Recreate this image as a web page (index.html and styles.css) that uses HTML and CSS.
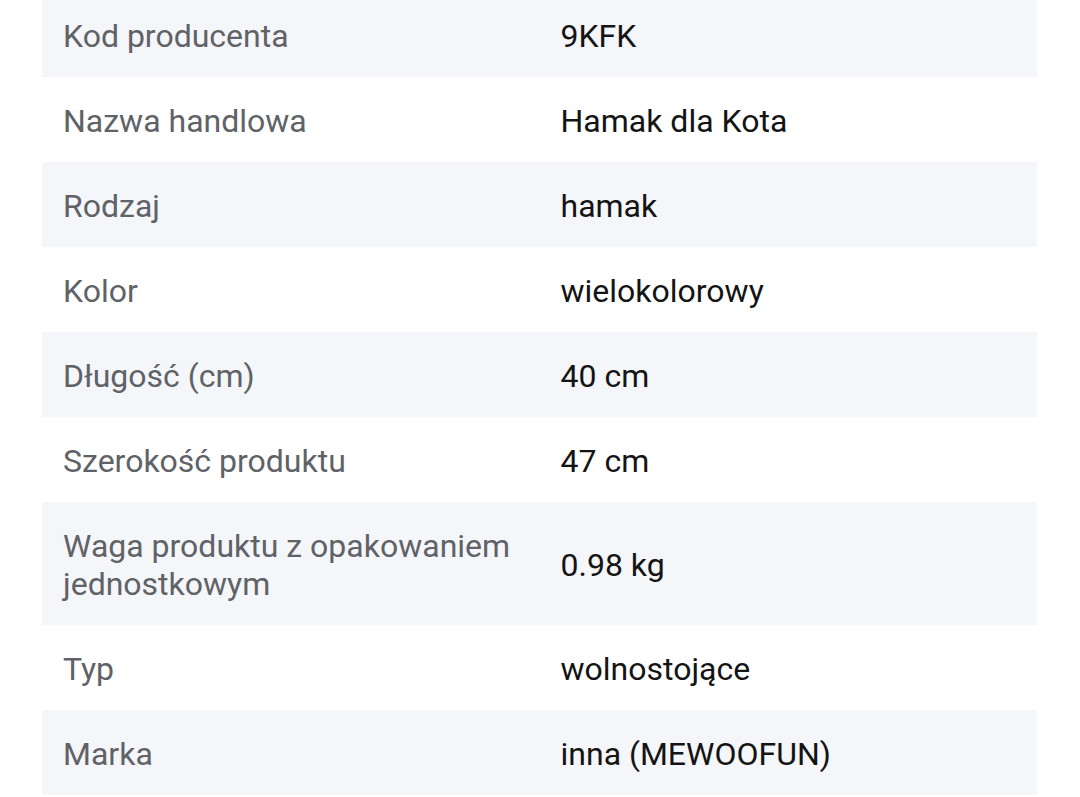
FILE: index.html
```html
<!DOCTYPE html>
<html lang="pl">
<head>
<meta charset="utf-8">
<title>Parametry</title>
<link rel="stylesheet" href="styles.css">
</head>
<body>
<div class="specs">
  <table class="spec-table">
    <tbody>
      <tr><td class="label">Kod producenta</td><td class="value">9KFK</td></tr>
      <tr><td class="label">Nazwa handlowa</td><td class="value">Hamak dla Kota</td></tr>
      <tr><td class="label">Rodzaj</td><td class="value">hamak</td></tr>
      <tr><td class="label">Kolor</td><td class="value">wielokolorowy</td></tr>
      <tr><td class="label">Długość (cm)</td><td class="value">40 cm</td></tr>
      <tr><td class="label">Szerokość produktu</td><td class="value">47 cm</td></tr>
      <tr><td class="label">Waga produktu z opakowaniem jednostkowym</td><td class="value">0.98 kg</td></tr>
      <tr><td class="label">Typ</td><td class="value">wolnostojące</td></tr>
      <tr><td class="label">Marka</td><td class="value">inna (MEWOOFUN)</td></tr>
    </tbody>
  </table>
</div>
</body>
</html>
```

FILE: styles.css
```css
html, body {
  margin: 0;
  padding: 0;
  background: #ffffff;
}

body {
  font-family: Roboto, "Noto Sans", "Liberation Sans", sans-serif;
  font-size: 32px;
  line-height: 38px;
}

.specs {
  margin: -8px 43px 0 42px;
}

.spec-table {
  width: 100%;
  border-collapse: collapse;
  table-layout: fixed;
}

.spec-table tr:nth-child(odd) {
  background: #f5f6fa;
}

.spec-table td {
  box-sizing: border-box;
  padding: 25px 21px 22px 21px;
  vertical-align: middle;
}

.label {
  width: 50%;
  color: #5f6267;
}

.value {
  color: #141414;
}
```
